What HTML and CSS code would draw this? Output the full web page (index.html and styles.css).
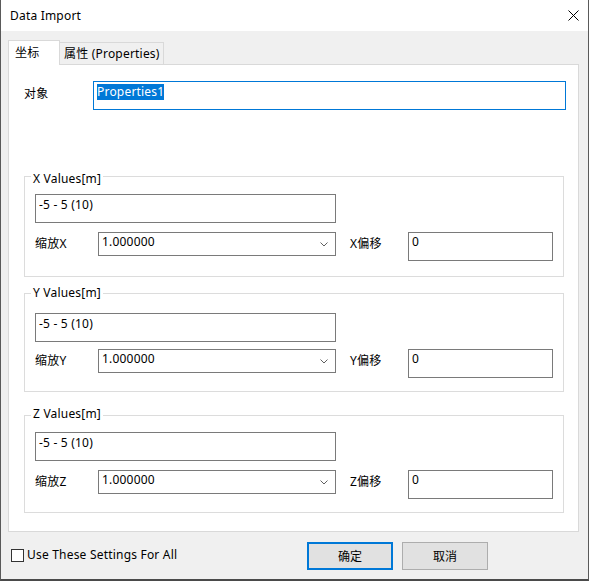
FILE: index.html
```html
<!DOCTYPE html>
<html>
<head>
<meta charset="utf-8">
<title>Data Import</title>
<link rel="stylesheet" href="styles.css">
</head>
<body>
<div class="window">
  <div class="titlebar">
    <span class="title">Data Import</span>
    <svg class="close" width="11" height="11" viewBox="0 0 11 11"><path d="M0.5 0.5 L10.5 10.5 M10.5 0.5 L0.5 10.5" stroke="#000" stroke-width="1" fill="none"/></svg>
  </div>
  <div class="content">
    <div class="tabs">
      <div class="tab active">坐标</div>
      <div class="tab">属性 (Properties)</div>
    </div>
    <div class="panel">
      <div class="object-row">
        <span class="object-label">对象</span>
        <div class="object-input"><span class="selected">Properties1</span></div>
      </div>

      <div class="group group-x">
        <div class="legend">X Values[m]</div>
        <div class="range">-5 - 5 (10)</div>
        <div class="row">
          <span class="scale-label">缩放X</span>
          <div class="combo"><span>1.000000</span><svg class="arrow" width="8" height="5" viewBox="0 0 8 5"><polyline points="0.5,0.5 4,4 7.5,0.5" fill="none" stroke="#606060" stroke-width="1"/></svg></div>
          <span class="offset-label">X偏移</span>
          <div class="offset">0</div>
        </div>
      </div>

      <div class="group group-y">
        <div class="legend">Y Values[m]</div>
        <div class="range">-5 - 5 (10)</div>
        <div class="row">
          <span class="scale-label">缩放Y</span>
          <div class="combo"><span>1.000000</span><svg class="arrow" width="8" height="5" viewBox="0 0 8 5"><polyline points="0.5,0.5 4,4 7.5,0.5" fill="none" stroke="#606060" stroke-width="1"/></svg></div>
          <span class="offset-label">Y偏移</span>
          <div class="offset">0</div>
        </div>
      </div>

      <div class="group group-z">
        <div class="legend">Z Values[m]</div>
        <div class="range">-5 - 5 (10)</div>
        <div class="row">
          <span class="scale-label">缩放Z</span>
          <div class="combo"><span>1.000000</span><svg class="arrow" width="8" height="5" viewBox="0 0 8 5"><polyline points="0.5,0.5 4,4 7.5,0.5" fill="none" stroke="#606060" stroke-width="1"/></svg></div>
          <span class="offset-label">Z偏移</span>
          <div class="offset">0</div>
        </div>
      </div>
    </div>
    <div class="footer">
      <label class="check"><span class="box"></span><span>Use These Settings For All</span></label>
      <div class="buttons">
        <button class="btn primary">确定</button>
        <button class="btn">取消</button>
      </div>
    </div>
  </div>
</div>
</body>
</html>
```
FILE: styles.css
```css
* { box-sizing: border-box; }
body {
  margin: 0;
  font-family: "Noto Sans", "Noto Sans CJK SC", sans-serif;
  font-size: 12px;
  letter-spacing: 0.2px;
  color: #000;
}
.window {
  width: 589px;
  height: 581px;
  background: #f0f0f0;
  border-left: 1px solid #5a5a5a;
  border-right: 1px solid #5a5a5a;
  border-bottom: 2px solid #4a4a4a;
}
.titlebar {
  height: 31px;
  background: #fff;
  display: flex;
  align-items: center;
  padding: 0 9px 0 9px;
}
.title { flex: 1; line-height: 16px; }
.close { display: block; }

.content { padding: 9px 0 0 7px; }

.tabs {
  display: flex;
  align-items: flex-start;
  height: 24px;
}
.tab {
  margin-top: 2px;
  margin-left: -1px;
  width: 105px;
  height: 22px;
  border: 1px solid #d9d9d9;
  border-bottom: none;
  padding-left: 4px;
  line-height: 21px;
  white-space: nowrap;
}
.tab.active {
  margin-top: 0;
  margin-left: 0;
  width: 52px;
  height: 25px;
  background: #fff;
  padding-left: 6px;
  line-height: 23px;
  position: relative;
  z-index: 1;
}

.panel {
  width: 571px;
  height: 468px;
  background: #fff;
  border: 1px solid #d9d9d9;
  padding-left: 15px;
}
.object-row {
  display: flex;
  align-items: flex-start;
  margin-top: 16px;
}
.object-label {
  width: 69px;
  padding-top: 5px;
  line-height: 16px;
}
.object-input {
  width: 473px;
  height: 29px;
  border: 1px solid #0078d7;
  padding: 2px 0 0 3px;
  line-height: 16px;
}
.selected {
  display: inline-block;
  background: #0078d7;
  color: #fff;
  line-height: 16px;
}

.group {
  width: 540px;
  border: 1px solid #dcdcdc;
  padding-left: 10px;
}
.legend {
  width: fit-content;
  margin-left: -4px;
  padding: 0 2px;
  background: #fff;
  line-height: 16px;
}
.range {
  width: 301px;
  height: 29px;
  border: 1px solid #7a7a7a;
  padding: 2px 0 0 3px;
  line-height: 16px;
}
.row {
  display: flex;
  align-items: flex-start;
}
.scale-label {
  width: 63px;
  line-height: 24px;
}
.combo {
  width: 238px;
  height: 24px;
  border: 1px solid #7a7a7a;
  display: flex;
  justify-content: space-between;
  align-items: flex-start;
  padding: 1px 7px 0 3px;
  line-height: 16px;
}
.arrow { align-self: center; display: block; margin-top: -1px; }
.offset-label {
  width: 58px;
  margin-left: 14px;
  line-height: 24px;
}
.offset {
  width: 145px;
  height: 29px;
  border: 1px solid #7a7a7a;
  padding: 1px 0 0 3px;
  line-height: 16px;
}

.group-x { margin-top: 66px; padding-bottom: 15px; }
.group-x .legend { margin-top: -6px; }
.group-x .range { margin-top: 7px; }
.group-x .row { margin-top: 9px; }

.group-y { margin-top: 16px; padding-bottom: 13px; }
.group-y .legend { margin-top: -9px; }
.group-y .range { margin-top: 12px; }
.group-y .row { margin-top: 7px; }

.group-z { margin-top: 23px; padding-bottom: 13px; }
.group-z .legend { margin-top: -10px; }
.group-z .range { margin-top: 10px; }
.group-z .row { margin-top: 9px; }

.footer {
  display: flex;
  align-items: center;
  height: 28px;
  margin-top: 10px;
}
.check {
  display: flex;
  align-items: center;
  gap: 3px;
  margin-left: 3px;
  margin-top: -2px;
  line-height: 16px;
}
.box {
  width: 13px;
  height: 13px;
  border: 1px solid #333;
  background: #fff;
}
.buttons {
  margin-left: auto;
  margin-right: 100px;
  display: flex;
  gap: 9px;
}
.btn {
  width: 86px;
  height: 28px;
  background: #e1e1e1;
  border: 1px solid #adadad;
  padding: 0;
  font: inherit;
  color: #000;
}
.btn.primary { border: 2px solid #0078d7; }
```
